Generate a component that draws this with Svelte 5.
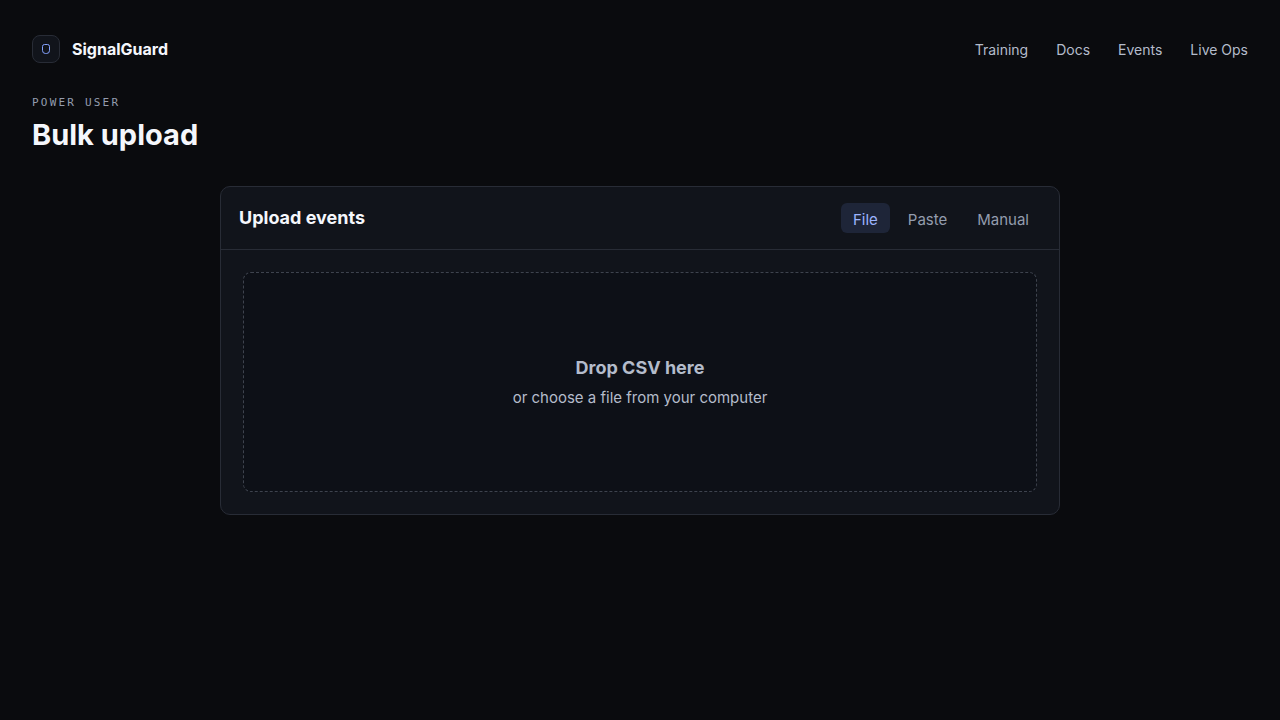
<script lang="ts">
  const links = ['Training', 'Docs', 'Events', 'Live Ops'];
  const tabs = ['File', 'Paste', 'Manual'];

  let active = 'File';
</script>

<svelte:head>
  <title>Bulk upload</title>
</svelte:head>

<header>
  <a class="brand" href="/">
    <span class="logo">
      <svg width="10" height="12" viewBox="0 0 10 12" aria-hidden="true">
        <path d="M3.500 1.500h3a2 2 0 0 1 2 2v4a3 3 0 0 1-3 3h-1a3 3 0 0 1-3-3v-4a2 2 0 0 1 2-2z" />
      </svg>
    </span>
    SignalGuard
  </a>
  <nav>
    {#each links as link}
      <a href="/{link.toLowerCase().replace(' ', '-')}">{link}</a>
    {/each}
  </nav>
</header>

<main>
  <p class="eyebrow">Power user</p>
  <h1>Bulk upload</h1>

  <section class="card">
    <div class="card-header">
      <h2>Upload events</h2>
      <div class="tabs">
        {#each tabs as tab}
          <button class:active={active === tab} on:click={() => (active = tab)}>{tab}</button>
        {/each}
      </div>
    </div>
    <div class="card-body">
      <label class="dropzone">
        <input type="file" accept=".csv">
        <strong>Drop CSV here</strong>
        <span>or choose a file from your computer</span>
      </label>
    </div>
  </section>
</main>

<style>
  :global(body) {
    background-color: #0a0b0e;
    color: #f5f7fc;
    font-family: Inter, "Liberation Sans", sans-serif;
    font-size: 15px;
    line-height: 24px;
  }

  a {
    color: inherit;
    text-decoration: none;
  }

  header {
    display: flex;
    align-items: center;
    justify-content: space-between;
    padding: 35px 32px 0;
  }

  .brand {
    display: flex;
    align-items: center;
    gap: 12px;
    font-size: 16px;
    font-weight: 700;
  }

  .logo {
    display: flex;
    align-items: center;
    justify-content: center;
    box-sizing: border-box;
    width: 28px;
    height: 28px;
    border: 1px solid #282c36;
    border-radius: 8px;
    background-color: #11141b;
  }

  .logo path {
    fill: none;
    stroke: #84a2ff;
  }

  nav {
    display: flex;
    gap: 28px;
    padding-top: 2px;
    color: #b4bccb;
    font-size: 14px;
  }

  main {
    padding: 32px;
  }

  .eyebrow {
    margin: 0;
    color: #949dae;
    font-family: "DejaVu Sans Mono", monospace;
    font-size: 11px;
    line-height: 16px;
    letter-spacing: 0.2em;
    text-transform: uppercase;
  }

  h1 {
    margin: 4px 0 31px;
    font-size: 29px;
    line-height: 40px;
  }

  .card {
    box-sizing: border-box;
    max-width: 840px;
    margin: 0 auto;
    border: 1px solid #282c36;
    border-radius: 10px;
    background-color: #11141b;
  }

  .card-header {
    display: flex;
    align-items: center;
    justify-content: space-between;
    padding: 16px 18px;
    border-bottom: 1px solid #282c36;
  }

  h2 {
    margin: 0;
    font-size: 18px;
    line-height: 28px;
  }

  .tabs {
    display: flex;
    gap: 6px;
  }

  button {
    height: 30px;
    padding: 3px 12px 0;
    border: 0;
    border-radius: 6px;
    background: none;
    color: #949dae;
    font: inherit;
    cursor: pointer;
  }

  button.active {
    background-color: #1e2538;
    color: #9cb4ff;
  }

  .card-body {
    padding: 22px;
  }

  .dropzone {
    display: flex;
    flex-direction: column;
    align-items: center;
    justify-content: center;
    gap: 4px;
    box-sizing: border-box;
    min-height: 220px;
    border: 1px dashed #3e434e;
    border-radius: 8px;
    background-color: #0d1017;
    color: #b4bccb;
    cursor: pointer;
  }

  .dropzone strong {
    font-size: 18px;
    line-height: 28px;
  }

  .dropzone input {
    display: none;
  }
</style>
